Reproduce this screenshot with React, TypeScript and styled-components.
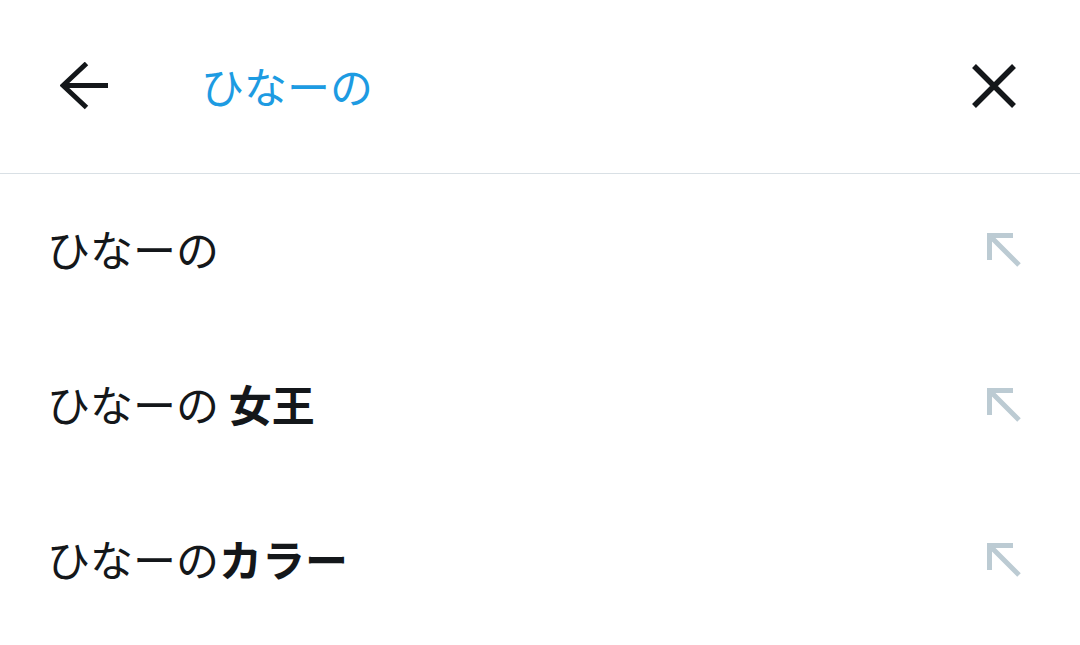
import React from "react";
import styled, { createGlobalStyle } from "styled-components";

const Global = createGlobalStyle`
  html, body { margin: 0; padding: 0; background: #ffffff; }
  body { font-family: "Noto Sans CJK JP", "Noto Sans", sans-serif; }
`;

const Page = styled.div`
  width: 1080px;
  height: 645px;
  background: #ffffff;
  overflow: hidden;
`;

const Header = styled.header`
  height: 173px;
  border-bottom: 1px solid #d9e0e5;
  display: flex;
  align-items: center;
  padding: 0 62px 0 60px;
  box-sizing: content-box;
`;

const IconButton = styled.button`
  width: 48px;
  height: 48px;
  padding: 0;
  border: 0;
  background: none;
  display: flex;
  align-items: center;
  justify-content: center;
  margin-top: -2px;
`;

const Title = styled.div`
  flex: 1;
  margin-left: 93px;
  font-size: 43px;
  color: #1d9be2;
  line-height: 1;
  margin-top: -2px;
`;

const List = styled.ul`
  list-style: none;
  margin: 0;
  padding: 0;
`;

const Row = styled.li`
  height: 155px;
  box-sizing: border-box;
  display: flex;
  align-items: center;
  justify-content: space-between;
  padding: 0 59px 6px 47px;
`;

const Label = styled.span`
  font-size: 43px;
  color: #14171a;
  line-height: 1;
  white-space: pre;
`;

const Strong = styled.b`
  font-weight: 700;
`;

const BackIcon = () => (
  <svg width="48" height="48" viewBox="0 0 48 48" fill="none">
    <path d="M3 23.5H48M26.5 1.5L3 23.5L26.5 45.5" stroke="#14171a" strokeWidth="5" strokeLinecap="butt" strokeLinejoin="miter" />
  </svg>
);

const CloseIcon = () => (
  <svg width="48" height="48" viewBox="0 0 48 48" fill="none">
    <path d="M4 4L44 44M44 4L4 44" stroke="#14171a" strokeWidth="5.5" />
  </svg>
);

const FillIcon = () => (
  <svg width="36" height="36" viewBox="0 0 36 36" fill="none">
    <path d="M4.5 4.5H28M4.5 2V29M4.5 4.5L34 34" stroke="#bccbd3" strokeWidth="5" />
  </svg>
);

const suggestions: { base: string; bold?: string }[] = [
  { base: "ひなーの" },
  { base: "ひなーの ", bold: "女王" },
  { base: "ひなーの", bold: "カラー" },
];

export default function App() {
  return (
    <Page>
      <Global />
      <Header>
        <IconButton aria-label="戻る">
          <BackIcon />
        </IconButton>
        <Title>ひなーの</Title>
        <IconButton aria-label="閉じる">
          <CloseIcon />
        </IconButton>
      </Header>
      <List>
        {suggestions.map((s, i) => (
          <Row key={i}>
            <Label>
              {s.base}
              {s.bold && <Strong>{s.bold}</Strong>}
            </Label>
            <FillIcon />
          </Row>
        ))}
      </List>
    </Page>
  );
}
